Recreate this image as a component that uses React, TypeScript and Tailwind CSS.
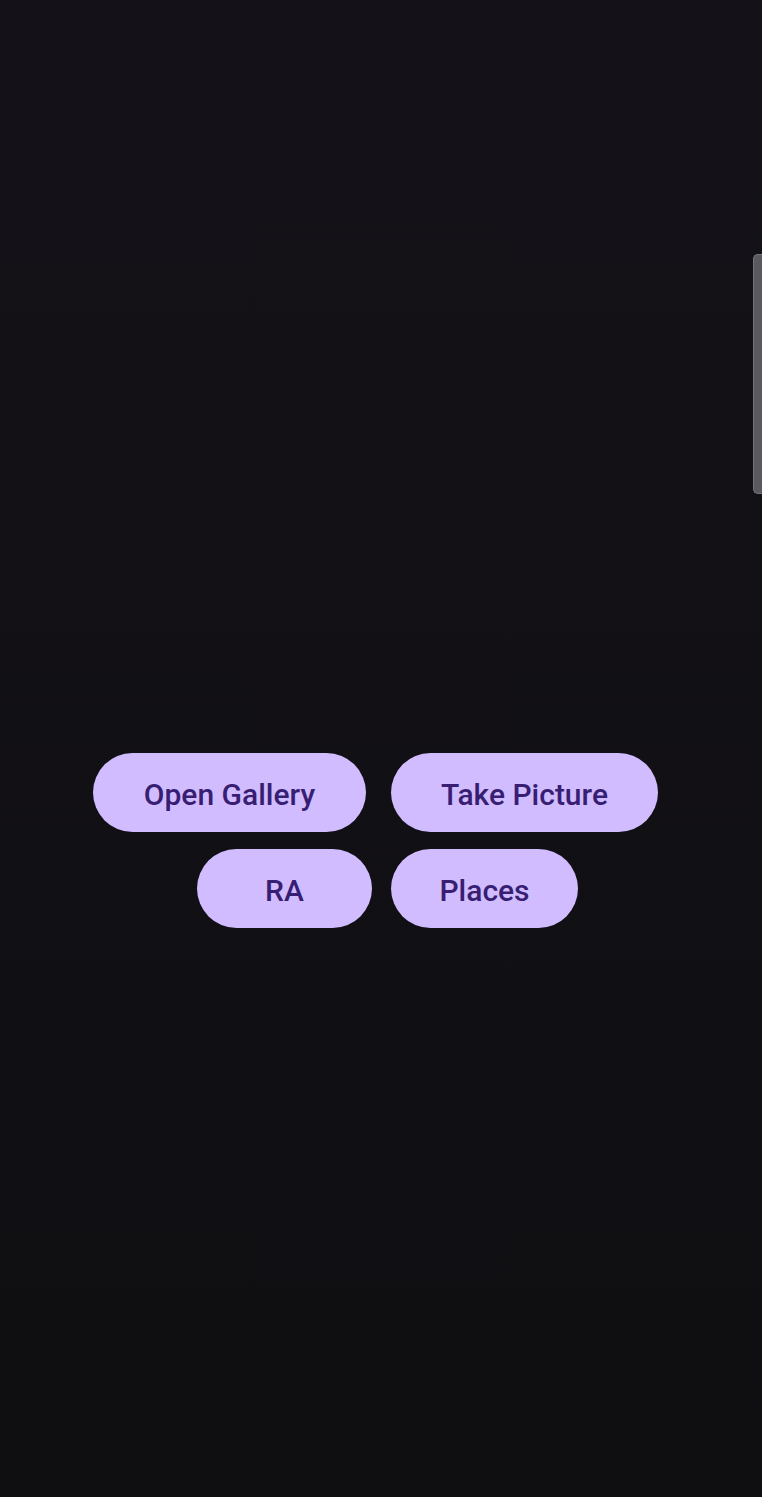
import React from "react";

const Pill = ({ label, w }: { label: string; w: string }) => (
  <button
    className={`${w} h-[79px] pt-[4px] rounded-full bg-[#d0bcff] text-[#381e72] text-[30px] leading-none font-medium flex items-center justify-center`}
  >
    {label}
  </button>
);

export default function App() {
  return (
    <div
      className="relative h-[1497px] w-full overflow-hidden bg-gradient-to-b from-[#141218] to-[#0f0e11]"
      style={{ fontFamily: "Roboto, 'Noto Sans', sans-serif" }}
    >
      <div className="flex flex-col gap-[17px] pt-[753px]">
        <div className="flex gap-[25px] pl-[93px]">
          <Pill label="Open Gallery" w="w-[273px]" />
          <Pill label="Take Picture" w="w-[267px]" />
        </div>
        <div className="flex gap-[19px] pl-[197px]">
          <Pill label="RA" w="w-[175px]" />
          <Pill label="Places" w="w-[187px]" />
        </div>
      </div>

      {/* scroll handle */}
      <div className="absolute right-0 top-[254px] h-[240px] w-[9px] rounded-l-[5px] bg-[#5b5960] border border-r-0 border-[#76737c]" />
    </div>
  );
}
